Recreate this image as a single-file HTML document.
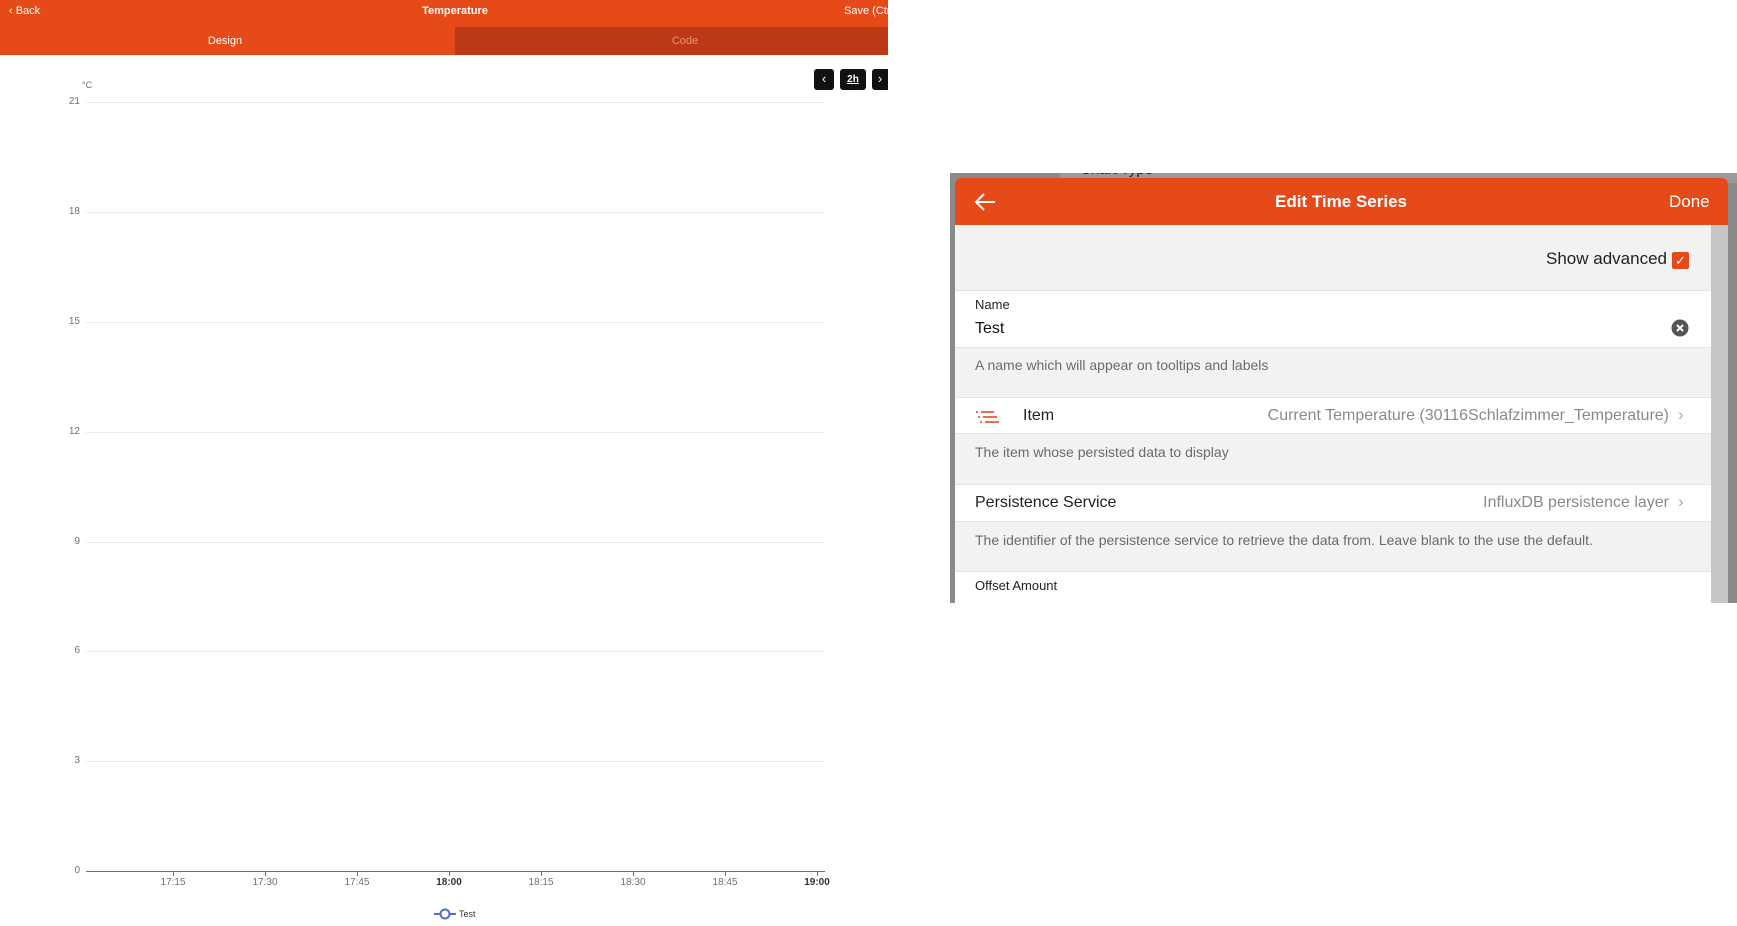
<!DOCTYPE html>
<html><head><meta charset="utf-8"><style>
*{margin:0;padding:0;box-sizing:border-box}
body{width:1737px;height:926px;background:#fff;position:relative;overflow:hidden;font-family:"Liberation Sans",sans-serif}
.a{position:absolute;white-space:nowrap}
.yl{position:absolute;right:1657px;font-size:10px;color:#6e7079;line-height:10px}
.gl{position:absolute;left:86px;width:738px;height:1px;background:#e8ebf0}
.xl{position:absolute;top:877px;font-size:10px;color:#6e7079;transform:translateX(-50%)}
.tk{position:absolute;top:871px;width:1px;height:5px;background:#6e7079}
.row{position:absolute;left:955px;width:756px;background:#fff;border-top:1px solid #e4e4e4;border-bottom:1px solid #e4e4e4}
.help{position:absolute;left:975px;font-size:14px;color:#6b6b6b}
</style></head><body>
<div class="a" style="left:0;top:0;width:888px;height:27px;background:#e64a19"></div>
<div class="a" style="left:0;top:27px;width:455px;height:28px;background:#e64a19"></div>
<div class="a" style="left:455px;top:27px;width:433px;height:28px;background:#bb3a15"></div>
<div class="a" style="left:9px;top:5px;font-size:11px;color:#fff">&#8249; Back</div>
<div class="a" style="left:455px;top:5px;transform:translateX(-50%);font-size:11px;color:#fff;font-weight:bold">Temperature</div>
<div class="a" style="left:844px;top:5px;font-size:11px;color:#fff;width:44px;overflow:hidden">Save (Ctrl</div>
<div class="a" style="left:225px;top:35px;transform:translateX(-50%);font-size:11px;color:#fff">Design</div>
<div class="a" style="left:685px;top:35px;transform:translateX(-50%);font-size:11px;color:#e89070">Code</div>
<div class="a" style="left:814px;top:69px;width:20px;height:21px;background:#111;border-radius:3px;color:#fff;font-size:13px;text-align:center;line-height:20px">&#8249;</div>
<div class="a" style="left:840px;top:69px;width:26px;height:21px;background:#111;border-radius:3px;color:#fff;font-size:10px;font-weight:bold;text-align:center;line-height:21px;text-decoration:underline">2h</div>
<div class="a" style="left:872px;top:69px;width:16px;height:21px;background:#111;border-radius:3px 0 0 3px;color:#fff;font-size:13px;text-align:center;line-height:20px">&#8250;</div>
<div class="a" style="left:82px;top:80px;font-size:9px;color:#6e7079">°C</div>
<div class="gl" style="top:102px"></div><div class="yl" style="top:97px">21</div>
<div class="gl" style="top:212px"></div><div class="yl" style="top:207px">18</div>
<div class="gl" style="top:322px"></div><div class="yl" style="top:317px">15</div>
<div class="gl" style="top:432px"></div><div class="yl" style="top:427px">12</div>
<div class="gl" style="top:542px"></div><div class="yl" style="top:537px">9</div>
<div class="gl" style="top:651px"></div><div class="yl" style="top:646px">6</div>
<div class="gl" style="top:761px"></div><div class="yl" style="top:756px">3</div>
<div class="a" style="left:86px;top:871px;width:739px;height:1px;background:#6e7079"></div><div class="yl" style="top:866px">0</div>
<div class="tk" style="left:173px"></div><div class="xl" style="left:173px">17:15</div>
<div class="tk" style="left:265px"></div><div class="xl" style="left:265px">17:30</div>
<div class="tk" style="left:357px"></div><div class="xl" style="left:357px">17:45</div>
<div class="tk" style="left:449px"></div><div class="xl" style="left:449px;font-weight:bold;color:#333">18:00</div>
<div class="tk" style="left:541px"></div><div class="xl" style="left:541px">18:15</div>
<div class="tk" style="left:633px"></div><div class="xl" style="left:633px">18:30</div>
<div class="tk" style="left:725px"></div><div class="xl" style="left:725px">18:45</div>
<div class="tk" style="left:817px"></div><div class="xl" style="left:817px;font-weight:bold;color:#333">19:00</div>
<svg class="a" style="left:434px;top:908px" width="22" height="12"><line x1="0" y1="6" x2="22" y2="6" stroke="#5470c6" stroke-width="2"/><circle cx="11" cy="6" r="4.5" fill="#fff" stroke="#5470c6" stroke-width="2"/></svg>
<div class="a" style="left:459px;top:909px;font-size:9px;color:#333">Test</div>

<div class="a" style="left:950px;top:173px;width:787px;height:430px;background:#8a8a8a;overflow:hidden">
 <div class="a" style="left:110px;top:0;width:677px;height:10px;background:#9a9a9a"></div>
 <div class="a" style="left:130px;top:-12px;font-size:15px;color:#222">Chart Type</div>
</div>
<div class="a" style="left:955px;top:178px;width:773px;height:425px;background:#f2f2f2;border-radius:6px 6px 0 0;overflow:hidden">
 <div class="a" style="left:0;top:0;width:773px;height:47px;background:#e64a19"></div>
 <div class="a" style="left:756px;top:47px;width:17px;height:380px;background:#c6c6c6"></div>
</div>
<svg class="a" style="left:974px;top:193px" width="22" height="18"><path d="M21 9H2M10 1L2 9l8 8" fill="none" stroke="#fff" stroke-width="2"/></svg>
<div class="a" style="left:1341px;top:192px;transform:translateX(-50%);font-size:17px;font-weight:bold;color:#fff">Edit Time Series</div>
<div class="a" style="left:1669px;top:192px;font-size:17px;color:#fff">Done</div>
<div class="a" style="right:70px;top:249px;font-size:17px;color:#222">Show advanced</div>
<div class="a" style="left:1672px;top:252px;width:17px;height:17px;background:#e64a19;border-radius:2px;color:#fff;font-size:13px;text-align:center;line-height:17px">✓</div>
<div class="row" style="top:290px;height:58px"></div>
<div class="a" style="left:975px;top:297px;font-size:13px;color:#222">Name</div>
<div class="a" style="left:975px;top:320px;font-size:16px;color:#111">Test</div>
<svg class="a" style="left:1671px;top:319px" width="18" height="18"><circle cx="9" cy="9" r="8.5" fill="#555"/><path d="M6 6l6 6M12 6l-6 6" stroke="#fff" stroke-width="2"/></svg>
<div class="help" style="top:357px">A name which will appear on tooltips and labels</div>
<div class="row" style="top:397px;height:37px"></div>
<svg class="a" style="left:976px;top:410px" width="24" height="14"><g stroke="#e64a19" stroke-width="1.6"><line x1="0" y1="2" x2="2" y2="2"/><line x1="5" y1="2" x2="18" y2="2"/><line x1="2" y1="7" x2="4" y2="7"/><line x1="7" y1="7" x2="21" y2="7"/><line x1="4" y1="12" x2="6" y2="12"/><line x1="9" y1="12" x2="23" y2="12"/></g></svg>
<div class="a" style="left:1023px;top:407px;font-size:16px;color:#222">Item</div>
<div class="a" style="right:68px;top:407px;font-size:16px;color:#8a8a8a">Current Temperature (30116Schlafzimmer_Temperature)</div>
<div class="a" style="left:1678px;top:405px;font-size:17px;color:#aaa">&#8250;</div>
<div class="help" style="top:444px">The item whose persisted data to display</div>
<div class="row" style="top:484px;height:38px"></div>
<div class="a" style="left:975px;top:494px;font-size:16px;color:#222">Persistence Service</div>
<div class="a" style="right:68px;top:494px;font-size:16px;color:#8a8a8a">InfluxDB persistence layer</div>
<div class="a" style="left:1678px;top:492px;font-size:17px;color:#aaa">&#8250;</div>
<div class="help" style="top:532px">The identifier of the persistence service to retrieve the data from. Leave blank to the use the default.</div>
<div class="row" style="top:571px;height:32px;border-bottom:none"></div>
<div class="a" style="left:975px;top:578px;font-size:13px;color:#222">Offset Amount</div>
</body></html>
